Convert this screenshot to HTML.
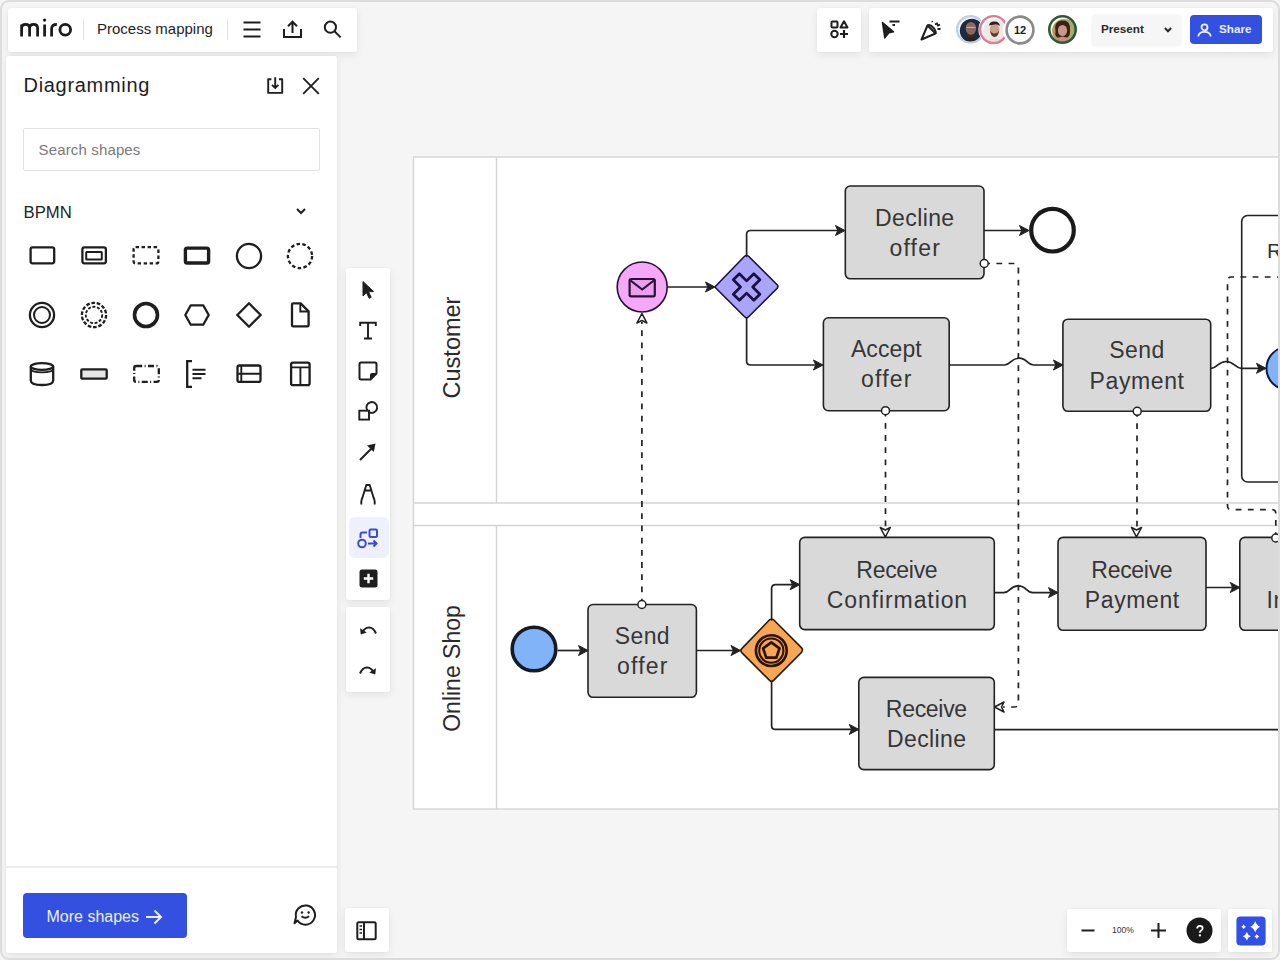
<!DOCTYPE html>
<html><head><meta charset="utf-8">
<style>
html,body{margin:0;padding:0;width:1280px;height:960px;overflow:hidden;background:#f5f5f5;font-family:"Liberation Sans",sans-serif;color:#1e1e1e;}
.frame{position:absolute;left:0;top:0;width:1280px;height:960px;box-sizing:border-box;border:2px solid #dcdcdc;border-radius:9px;pointer-events:none;z-index:50;}
.panel{position:absolute;background:#fff;border-radius:2px;box-shadow:0 3px 9px rgba(0,0,0,0.08),0 0 2px rgba(0,0,0,0.05);}
svg.full{position:absolute;left:0;top:0;}
.t{position:absolute;white-space:nowrap;line-height:1;}
.ic{position:absolute;overflow:visible;}
</style></head><body>
<svg class="full" width="1280" height="960" viewBox="0 0 1280 960" font-family="Liberation Sans, sans-serif">
<rect x="413.5" y="157" width="900" height="652" fill="#fff" stroke="#d4d4d4" stroke-width="1.4"/>
<line x1="413" y1="503" x2="1290" y2="503" stroke="#d4d4d4" stroke-width="1.4"/>
<line x1="413" y1="525.5" x2="1290" y2="525.5" stroke="#d4d4d4" stroke-width="1.4"/>
<line x1="496.5" y1="157" x2="496.5" y2="503" stroke="#d4d4d4" stroke-width="1.4"/>
<line x1="496.5" y1="525.5" x2="496.5" y2="809" stroke="#d4d4d4" stroke-width="1.4"/>
<text transform="translate(460,347.5) rotate(-90)" text-anchor="middle" font-size="23.5" fill="#2a2a2a">Customer</text>
<text transform="translate(460,668.5) rotate(-90)" text-anchor="middle" font-size="23" fill="#2a2a2a">Online Shop</text>
<rect x="1241.7" y="215.5" width="58.3" height="266.5" rx="6" fill="#fff" stroke="#222222" stroke-width="1.6"/>
<path d="M668,287 L714,287" fill="none" stroke="#222222" stroke-width="1.7" stroke-linejoin="round"/>
<polygon points="715.0,287.0 705.5,282.0 707.8,287.0 705.5,292.0" fill="#222222" stroke="#222222" stroke-width="1" stroke-linejoin="round"/>
<path d="M746.6,256 L746.6,234.5 Q746.6,230.5 750.6,230.5 L844,230.5" fill="none" stroke="#222222" stroke-width="1.7" stroke-linejoin="round"/>
<polygon points="845.0,230.5 835.5,225.5 837.8,230.5 835.5,235.5" fill="#222222" stroke="#222222" stroke-width="1" stroke-linejoin="round"/>
<path d="M746.6,318 L746.6,361 Q746.6,365 750.6,365 L822,365" fill="none" stroke="#222222" stroke-width="1.7" stroke-linejoin="round"/>
<polygon points="823.0,365.0 813.5,360.0 815.8,365.0 813.5,370.0" fill="#222222" stroke="#222222" stroke-width="1" stroke-linejoin="round"/>
<path d="M984,230.5 L1028,230.5" fill="none" stroke="#222222" stroke-width="1.7" stroke-linejoin="round"/>
<polygon points="1029.0,230.5 1019.5,225.5 1021.8,230.5 1019.5,235.5" fill="#222222" stroke="#222222" stroke-width="1" stroke-linejoin="round"/>
<path d="M949.2,365 L1004.5,365 C1011.0,365 1010.5,358.2 1019,358.2 C1027.5,358.2 1027.0,365 1033.5,365 L1062,365" fill="none" stroke="#222222" stroke-width="1.7" stroke-linejoin="round"/>
<polygon points="1063.0,365.0 1053.5,360.0 1055.8,365.0 1053.5,370.0" fill="#222222" stroke="#222222" stroke-width="1" stroke-linejoin="round"/>
<path d="M1210.7,368.3 L1211.2,368.3 C1217.7,368.3 1217.7,361.5 1226.2,361.5 C1234.7,361.5 1234.7,368.3 1241.2,368.3 L1265,368.3" fill="none" stroke="#222222" stroke-width="1.7" stroke-linejoin="round"/>
<polygon points="1266.0,368.3 1256.5,363.3 1258.8,368.3 1256.5,373.3" fill="#222222" stroke="#222222" stroke-width="1" stroke-linejoin="round"/>
<path d="M557.5,650.5 L587,650.5" fill="none" stroke="#222222" stroke-width="1.7" stroke-linejoin="round"/>
<polygon points="588.0,650.5 578.5,645.5 580.8,650.5 578.5,655.5" fill="#222222" stroke="#222222" stroke-width="1" stroke-linejoin="round"/>
<path d="M696.4,650.5 L739.5,650.5" fill="none" stroke="#222222" stroke-width="1.7" stroke-linejoin="round"/>
<polygon points="740.5,650.5 731.0,645.5 733.3,650.5 731.0,655.5" fill="#222222" stroke="#222222" stroke-width="1" stroke-linejoin="round"/>
<path d="M771.6,619.6 L771.6,588.7 Q771.6,584.7 775.6,584.7 L798.7,584.7" fill="none" stroke="#222222" stroke-width="1.7" stroke-linejoin="round"/>
<polygon points="799.7,584.7 790.2,579.7 792.5,584.7 790.2,589.7" fill="#222222" stroke="#222222" stroke-width="1" stroke-linejoin="round"/>
<path d="M771.6,681.6 L771.6,725.4 Q771.6,729.4 775.6,729.4 L857.8,729.4" fill="none" stroke="#222222" stroke-width="1.7" stroke-linejoin="round"/>
<polygon points="858.8,729.4 849.3,724.4 851.6,729.4 849.3,734.4" fill="#222222" stroke="#222222" stroke-width="1" stroke-linejoin="round"/>
<path d="M994.3,592.6 L1003.7,592.6 C1010.2,592.6 1009.7,585.8000000000001 1018.2,585.8000000000001 C1026.7,585.8000000000001 1026.2,592.6 1032.7,592.6 L1057,592.6" fill="none" stroke="#222222" stroke-width="1.7" stroke-linejoin="round"/>
<polygon points="1058.0,592.6 1048.5,587.6 1050.8,592.6 1048.5,597.6" fill="#222222" stroke="#222222" stroke-width="1" stroke-linejoin="round"/>
<path d="M1206,587.5 L1238.8,587.5" fill="none" stroke="#222222" stroke-width="1.7" stroke-linejoin="round"/>
<polygon points="1239.8,587.5 1230.3,582.5 1232.6,587.5 1230.3,592.5" fill="#222222" stroke="#222222" stroke-width="1" stroke-linejoin="round"/>
<path d="M994.3,729.6 L1290,729.6" fill="none" stroke="#222222" stroke-width="1.7" stroke-linejoin="round"/>
<path d="M641.9,604.5 L641.9,322" fill="none" stroke="#222222" stroke-width="1.7" stroke-dasharray="5.8 6.4" stroke-linejoin="round"/>
<polygon points="641.9,313.5 636.9,323.0 641.9,320.5 646.9,323.0" fill="#fff" stroke="#222222" stroke-width="1.6" stroke-linejoin="round"/>
<path d="M885.5,410.7 L885.5,528" fill="none" stroke="#222222" stroke-width="1.7" stroke-dasharray="5.8 6.4" stroke-linejoin="round"/>
<polygon points="885.3,537.0 880.3,527.5 885.3,530.0 890.3,527.5" fill="#fff" stroke="#222222" stroke-width="1.6" stroke-linejoin="round"/>
<path d="M1137,411 L1137,528" fill="none" stroke="#222222" stroke-width="1.7" stroke-dasharray="5.8 6.4" stroke-linejoin="round"/>
<polygon points="1136.5,537.0 1131.5,527.5 1136.5,530.0 1141.5,527.5" fill="#fff" stroke="#222222" stroke-width="1.6" stroke-linejoin="round"/>
<path d="M984.2,263.5 L1014.4,263.5 Q1018.4,263.5 1018.4,267.5 L1018.4,703 Q1018.4,707 1014.4,707 L1003,707" fill="none" stroke="#222222" stroke-width="1.7" stroke-dasharray="5.8 6.4" stroke-linejoin="round"/>
<polygon points="994.5,707.0 1004.0,702.0 1001.5,707.0 1004.0,712.0" fill="#fff" stroke="#222222" stroke-width="1.6" stroke-linejoin="round"/>
<path d="M1275.8,538 L1275.8,513.7 Q1275.8,509.7 1271.8,509.7 L1231.5,509.7 Q1227.5,509.7 1227.5,505.7 L1227.5,281 Q1227.5,277 1231.5,277 L1290,277" fill="none" stroke="#222222" stroke-width="1.7" stroke-dasharray="5.8 6.4" stroke-linejoin="round"/>
<rect x="845.3" y="186" width="138.7" height="92.8" rx="5" fill="#d9d9d9" stroke="#222222" stroke-width="1.6"/>
<rect x="823.4" y="317.8" width="125.8" height="92.9" rx="5" fill="#d9d9d9" stroke="#222222" stroke-width="1.6"/>
<rect x="1062.9" y="319.2" width="147.8" height="92.1" rx="5" fill="#d9d9d9" stroke="#222222" stroke-width="1.6"/>
<rect x="588" y="604.5" width="108.4" height="92.8" rx="5" fill="#d9d9d9" stroke="#222222" stroke-width="1.6"/>
<rect x="799.7" y="537.4" width="194.6" height="92.2" rx="5" fill="#d9d9d9" stroke="#222222" stroke-width="1.6"/>
<rect x="1058" y="537.4" width="148.0" height="92.9" rx="5" fill="#d9d9d9" stroke="#222222" stroke-width="1.6"/>
<rect x="858.8" y="677.4" width="135.5" height="92.2" rx="5" fill="#d9d9d9" stroke="#222222" stroke-width="1.6"/>
<rect x="1239.8" y="537.4" width="60.2" height="92.9" rx="5" fill="#d9d9d9" stroke="#222222" stroke-width="1.6"/>
<text x="914.80" y="226" text-anchor="middle" font-size="23" letter-spacing="0.4" fill="#363636">Decline</text>
<text x="915.20" y="256" text-anchor="middle" font-size="23" letter-spacing="1.2" fill="#363636">offer</text>
<text x="886.35" y="357.4" text-anchor="middle" font-size="23" letter-spacing="0.1" fill="#363636">Accept</text>
<text x="886.90" y="387.4" text-anchor="middle" font-size="23" letter-spacing="1.2" fill="#363636">offer</text>
<text x="1137.00" y="358.2" text-anchor="middle" font-size="23" letter-spacing="0.4" fill="#363636">Send</text>
<text x="1137.10" y="388.7" text-anchor="middle" font-size="23" letter-spacing="0.6" fill="#363636">Payment</text>
<text x="642.40" y="644.4" text-anchor="middle" font-size="23" letter-spacing="0.4" fill="#363636">Send</text>
<text x="642.80" y="673.9" text-anchor="middle" font-size="23" letter-spacing="1.2" fill="#363636">offer</text>
<text x="896.85" y="577.6" text-anchor="middle" font-size="23" letter-spacing="-0.3" fill="#363636">Receive</text>
<text x="897.45" y="607.6" text-anchor="middle" font-size="23" letter-spacing="0.9" fill="#363636">Confirmation</text>
<text x="1131.85" y="577.5" text-anchor="middle" font-size="23" letter-spacing="-0.3" fill="#363636">Receive</text>
<text x="1132.30" y="607.8" text-anchor="middle" font-size="23" letter-spacing="0.6" fill="#363636">Payment</text>
<text x="926.35" y="716.8" text-anchor="middle" font-size="23" letter-spacing="-0.3" fill="#363636">Receive</text>
<text x="926.70" y="747.1999999999999" text-anchor="middle" font-size="23" letter-spacing="0.4" fill="#363636">Decline</text>
<text x="1266.6" y="607.8" font-size="23" letter-spacing="0.4" fill="#363636">In</text>
<text x="1267" y="257.5" font-size="21" fill="#333">R</text>
<circle cx="642.2" cy="287" r="25" fill="#f4a8f8" stroke="#2a0f3a" stroke-width="1.6"/>
<rect x="629.6" y="279" width="25.2" height="17.3" rx="1.5" fill="#e9a0ec" stroke="#2a0f3a" stroke-width="2.2"/>
<path d="M630.5,280.5 L642.2,289.5 L653.9,280.5" fill="none" stroke="#2a0f3a" stroke-width="2.2" stroke-linejoin="round"/>
<path d="M746.6,256.2 Q747.6,255.2 748.6,256.2 L777.4,285 Q778.4,286 777.4,288 L748.6,316.8 Q746.6,318.8 744.6,316.8 L715.8,288 Q714.8,287 715.8,286 L744.6,256.2 Q745.6,255.2 746.6,256.2 Z" fill="#aaa4fa" stroke="#1a1040" stroke-width="1.6"/>
<path transform="translate(746.6,287) rotate(45)" d="M-4.3,-14.5 L4.3,-14.5 L4.3,-4.3 L14.5,-4.3 L14.5,4.3 L4.3,4.3 L4.3,14.5 L-4.3,14.5 L-4.3,4.3 L-14.5,4.3 L-14.5,-4.3 L-4.3,-4.3 Z" fill="#aaa4fa" stroke="#1a1040" stroke-width="2.7" stroke-linejoin="round"/>
<circle cx="1052.5" cy="230.2" r="21.3" fill="#fff" stroke="#1a1a1a" stroke-width="4.2"/>
<circle cx="534" cy="649" r="21.8" fill="#80b3f7" stroke="#161a24" stroke-width="3.6"/>
<circle cx="1288" cy="368.3" r="21.5" fill="#80b3f7" stroke="#101a40" stroke-width="2"/>
<path d="M771.6,619.8 Q772.6,618.8 773.6,619.8 L801.4,647.6 Q803.4,649.6 801.4,652.6 L773.6,680.4 Q771.6,682.4 769.6,680.4 L741.8,652.6 Q739.8,650.6 741.8,648.6 L769.6,619.8 Q770.6,618.8 771.6,619.8 Z" fill="#f7a655" stroke="#2a1a08" stroke-width="1.6"/>
<circle cx="771.3" cy="650.6" r="15.4" fill="none" stroke="#2a1205" stroke-width="2.6"/>
<circle cx="771.3" cy="650.6" r="12.1" fill="none" stroke="#2a1205" stroke-width="2.1"/>
<polygon points="771.3,642.3 779.5,648.3 776.4,657.6 766.2,657.6 763.1,648.3" fill="none" stroke="#2a1205" stroke-width="2.7" stroke-linejoin="round"/>
<circle cx="641.9" cy="604.5" r="4" fill="#fff" stroke="#222222" stroke-width="1.5"/>
<circle cx="885.5" cy="410.7" r="4" fill="#fff" stroke="#222222" stroke-width="1.5"/>
<circle cx="1137.2" cy="411.3" r="4" fill="#fff" stroke="#222222" stroke-width="1.5"/>
<circle cx="984.2" cy="263.5" r="4" fill="#fff" stroke="#222222" stroke-width="1.5"/>
<circle cx="1275.8" cy="538" r="4" fill="#fff" stroke="#222222" stroke-width="1.5"/>
</svg>
<div class="panel" style="left:8px;top:8px;width:349px;height:44px;border-radius:2px;"></div>
<svg class="ic" style="left:0px;top:0px" width="80" height="50" viewBox="0 0 80 50"><path d="M21.6,36.6V24.4M21.6,28.3Q21.6,24.3 25.6,24.3Q29.6,24.3 29.6,28.3V36.6M29.6,28.3Q29.6,24.3 33.6,24.3Q37.6,24.3 37.6,28.3V36.6M44.6,24.4V36.6M51.6,36.6V29Q51.6,24.4 56.9,24.4" fill="none" stroke="#1a1a1a" stroke-width="2.75"/><circle cx="44.6" cy="20.1" r="1.65" fill="#1a1a1a"/><circle cx="65.25" cy="29.8" r="5.35" fill="none" stroke="#1a1a1a" stroke-width="2.8"/></svg>
<div class="abs" style="position:absolute;left:83px;top:19px;width:1px;height:21px;background:#e3e3e3"></div>
<div class="t" style="left:97px;top:21.2px;font-size:15px;color:#1e1e1e;">Process mapping</div>
<div class="abs" style="position:absolute;left:227px;top:19px;width:1px;height:21px;background:#e3e3e3"></div>
<svg class="ic" style="left:243px;top:21px" width="18" height="17" viewBox="0 0 18 17"><path d="M0.5,1.5H17.5M0.5,8.5H17.5M0.5,15.5H17.5" stroke="#1e1e1e" stroke-width="2" fill="none"/></svg>
<svg class="ic" style="left:283px;top:20px" width="19" height="18" viewBox="0 0 19 18"><path d="M1,9V17H18V9" stroke="#1e1e1e" stroke-width="2" fill="none"/><path d="M9.5,13V2M5,6.2L9.5,1.7L14,6.2" stroke="#1e1e1e" stroke-width="2" fill="none"/></svg>
<svg class="ic" style="left:323px;top:20px" width="19" height="19" viewBox="0 0 19 19"><circle cx="7.4" cy="7.2" r="5.6" stroke="#1e1e1e" stroke-width="2" fill="none"/><path d="M11.5,11.3L17.6,17.4" stroke="#1e1e1e" stroke-width="2" fill="none"/></svg>
<div class="panel" style="left:6px;top:56px;width:331px;height:897px;border-radius:2px;"></div>
<div class="abs" style="position:absolute;left:6px;top:866px;width:331px;height:1.5px;background:#ececec"></div>
<div class="t" style="left:23.5px;top:74.5px;font-size:20px;letter-spacing:0.7px;color:#1e1e1e;">Diagramming</div>
<svg class="ic" style="left:266px;top:76px" width="19" height="19" viewBox="0 0 19 19"><path d="M5.4,3.3H2.2V16.9H16.2V3.3H13" stroke="#1e1e1e" stroke-width="1.9" fill="none" stroke-linejoin="round"/><path d="M9.2,1.2V12M6,8.8L9.2,12L12.4,8.8" stroke="#1e1e1e" stroke-width="1.9" fill="none"/></svg>
<svg class="ic" style="left:302px;top:77px" width="18" height="18" viewBox="0 0 18 18"><path d="M1.2,1.2L16.8,16.8M16.8,1.2L1.2,16.8" stroke="#1e1e1e" stroke-width="1.85" fill="none"/></svg>
<div class="abs" style="position:absolute;left:23px;top:127.5px;width:295px;height:41px;border:1px solid #e2e2e2;border-radius:2px;"></div>
<div class="t" style="left:38.5px;top:141.6px;font-size:15px;letter-spacing:0.15px;color:#7a7a7a;">Search shapes</div>
<div class="t" style="left:23.5px;top:204.7px;font-size:16.7px;color:#1e1e1e;">BPMN</div>
<svg class="ic" style="left:296px;top:208px" width="10" height="7" viewBox="0 0 10 7"><path d="M1,1L5,5L9,1" stroke="#1e1e1e" stroke-width="2" fill="none"/></svg>
<svg class="ic" style="left:27.4px;top:240.5px" width="30" height="30" viewBox="0 0 30 30"><rect x="3.6" y="6.3" width="23.6" height="16" rx="2" fill="none" stroke="#1e1e1e" stroke-width="2.3"/></svg>
<svg class="ic" style="left:79.0px;top:240.5px" width="30" height="30" viewBox="0 0 30 30"><rect x="3.4" y="6.3" width="23.5" height="16" rx="2" fill="none" stroke="#1e1e1e" stroke-width="2.3"/><rect x="7.2" y="11" width="15.6" height="7.4" rx="0.5" fill="none" stroke="#1e1e1e" stroke-width="2"/></svg>
<svg class="ic" style="left:130.5px;top:240.5px" width="30" height="30" viewBox="0 0 30 30"><rect x="2.6" y="6.2" width="24.8" height="16.2" rx="2" fill="none" stroke="#1e1e1e" stroke-width="2.3" stroke-dasharray="3.4 2.6"/></svg>
<svg class="ic" style="left:182.0px;top:240.5px" width="30" height="30" viewBox="0 0 30 30"><rect x="3.4" y="7.1" width="23.2" height="14.9" rx="1.8" fill="none" stroke="#1e1e1e" stroke-width="3.4"/></svg>
<svg class="ic" style="left:233.8px;top:240.5px" width="30" height="30" viewBox="0 0 30 30"><circle cx="15" cy="15" r="12.1" fill="none" stroke="#1e1e1e" stroke-width="2.3"/></svg>
<svg class="ic" style="left:285.0px;top:240.5px" width="30" height="30" viewBox="0 0 30 30"><circle cx="15" cy="15" r="12.1" fill="none" stroke="#1e1e1e" stroke-width="2.3" stroke-dasharray="3.6 2.3"/></svg>
<svg class="ic" style="left:27.4px;top:299.8px" width="30" height="30" viewBox="0 0 30 30"><circle cx="15" cy="15" r="12.1" fill="none" stroke="#1e1e1e" stroke-width="2.3"/><circle cx="15" cy="15" r="8" fill="none" stroke="#1e1e1e" stroke-width="2"/></svg>
<svg class="ic" style="left:79.0px;top:299.8px" width="30" height="30" viewBox="0 0 30 30"><circle cx="15" cy="15" r="12.1" fill="none" stroke="#1e1e1e" stroke-width="2.3" stroke-dasharray="3.7 1.7"/><circle cx="15" cy="15" r="8.2" fill="none" stroke="#1e1e1e" stroke-width="1.9" stroke-dasharray="3 1.6"/></svg>
<svg class="ic" style="left:130.5px;top:299.8px" width="30" height="30" viewBox="0 0 30 30"><circle cx="15" cy="15" r="11.5" fill="none" stroke="#1e1e1e" stroke-width="3.6"/></svg>
<svg class="ic" style="left:182.0px;top:299.8px" width="30" height="30" viewBox="0 0 30 30"><path d="M8.8,5.3H21.2L26.7,15L21.2,24.7H8.8L3.3,15Z" fill="none" stroke="#1e1e1e" stroke-width="2.3" stroke-linejoin="round"/></svg>
<svg class="ic" style="left:233.8px;top:299.8px" width="30" height="30" viewBox="0 0 30 30"><path d="M15,3.3L26.7,15L15,26.7L3.3,15Z" fill="none" stroke="#1e1e1e" stroke-width="2.3" stroke-linejoin="round"/></svg>
<svg class="ic" style="left:285.0px;top:299.8px" width="30" height="30" viewBox="0 0 30 30"><path d="M7,4.6Q7,3.4 8.2,3.4H15.6L23.6,11.4V25.2Q23.6,26.4 22.4,26.4H8.2Q7,26.4 7,25.2Z" fill="none" stroke="#1e1e1e" stroke-width="2.3" stroke-linejoin="round"/><path d="M15.3,3.6V11.5H23.4" fill="none" stroke="#1e1e1e" stroke-width="1.9"/></svg>
<svg class="ic" style="left:27.4px;top:359.0px" width="30" height="30" viewBox="0 0 30 30"><path d="M3.8,7.5V21.5Q3.8,26 15,26Q26.2,26 26.2,21.5V7.5" fill="none" stroke="#1e1e1e" stroke-width="2.3"/><ellipse cx="15" cy="7.5" rx="11.2" ry="3.4" fill="none" stroke="#1e1e1e" stroke-width="2.3"/><path d="M3.8,10.3Q4.5,13.4 15,13.4Q25.5,13.4 26.2,10.3" fill="none" stroke="#1e1e1e" stroke-width="1.8"/></svg>
<svg class="ic" style="left:79.0px;top:359.0px" width="30" height="30" viewBox="0 0 30 30"><rect x="2.3" y="10.3" width="25.4" height="9.4" rx="1" fill="#e6e6e6" stroke="#1e1e1e" stroke-width="2.3"/></svg>
<svg class="ic" style="left:130.5px;top:359.0px" width="30" height="30" viewBox="0 0 30 30"><rect x="3.2" y="7" width="24.6" height="15.9" rx="2" fill="none" stroke="#1e1e1e" stroke-width="2.3" stroke-dasharray="6 2.4 1 2.4"/></svg>
<svg class="ic" style="left:182.0px;top:359.0px" width="30" height="30" viewBox="0 0 30 30"><path d="M10,2.2H5.2V27.8H10" fill="none" stroke="#1e1e1e" stroke-width="2.3"/><path d="M10.5,10.7H23.5M10.5,15H23.5M10.5,19.3H19.5" fill="none" stroke="#1e1e1e" stroke-width="2"/></svg>
<svg class="ic" style="left:233.8px;top:359.0px" width="30" height="30" viewBox="0 0 30 30"><rect x="3.5" y="6.5" width="23" height="16.4" rx="2" fill="none" stroke="#1e1e1e" stroke-width="2.3"/><path d="M3.5,14.8H26.5M7.3,6.8V22.8" fill="none" stroke="#1e1e1e" stroke-width="1.9"/></svg>
<svg class="ic" style="left:285.0px;top:359.0px" width="30" height="30" viewBox="0 0 30 30"><rect x="6.1" y="3.6" width="18.5" height="22.6" rx="2" fill="none" stroke="#1e1e1e" stroke-width="2.3"/><path d="M6.2,8.4H24.5M15.4,8.4V26" fill="none" stroke="#1e1e1e" stroke-width="1.9"/></svg>
<div class="panel" style="left:346px;top:268px;width:44px;height:332px;border-radius:2px;"></div>
<div class="panel" style="left:346px;top:607px;width:44px;height:85px;border-radius:2px;"></div>
<div class="abs" style="position:absolute;left:348.5px;top:517px;width:40px;height:40.5px;border-radius:6px;background:#eef0fc"></div>
<svg class="ic" style="left:358px;top:280px" width="20" height="20" viewBox="0 0 20 20"><path d="M5,1.5L15.5,11.5L10.5,11.8L13.2,17.3L11.2,18.3L8.5,12.7L5,16Z" fill="#1e1e1e" stroke="#1e1e1e" stroke-width="1" stroke-linejoin="round"/></svg>
<svg class="ic" style="left:358px;top:321px" width="20" height="20" viewBox="0 0 20 20"><path d="M2.2,5V1.8H17.8V5M10,1.8V17.5M6,17.5H14" fill="none" stroke="#1e1e1e" stroke-width="1.9"/></svg>
<svg class="ic" style="left:358px;top:361px" width="20" height="20" viewBox="0 0 20 20"><path d="M1.5,3Q1.5,1.5 3,1.5H17Q18.5,1.5 18.5,3V12.5L12.5,18.5H3Q1.5,18.5 1.5,17Z" fill="none" stroke="#1e1e1e" stroke-width="2" stroke-linejoin="round"/><path d="M18.5,12L12,18.5V14Q12,12 14,12Z" fill="#1e1e1e"/></svg>
<svg class="ic" style="left:358px;top:401px" width="21" height="21" viewBox="0 0 21 21"><rect x="1.3" y="9.7" width="9.7" height="8.9" fill="none" stroke="#1e1e1e" stroke-width="1.9"/><path d="M9.45,9.7A5.4,5.4 0 1 1 11,11.1" fill="none" stroke="#1e1e1e" stroke-width="1.9"/></svg>
<svg class="ic" style="left:358px;top:442px" width="20" height="20" viewBox="0 0 20 20"><path d="M2,18L15,5" stroke="#1e1e1e" stroke-width="2" fill="none"/><path d="M9,3.5L17.5,1.5L15.8,10Z" fill="#1e1e1e"/></svg>
<svg class="ic" style="left:358px;top:482.5px" width="20" height="22" viewBox="0 0 20 22"><path d="M3.3,21.5V18.5Q3.3,17 4.5,14.5L8.3,2H11.7L15.5,14.5Q16.7,17 16.7,18.5V21.5M6.5,7.5H13.5" fill="none" stroke="#1e1e1e" stroke-width="1.9" stroke-linejoin="round"/></svg>
<svg class="ic" style="left:357px;top:527.5px" width="22" height="21" viewBox="0 0 22 21"><circle cx="5" cy="15.5" r="3.8" fill="none" stroke="#3d4bd1" stroke-width="2"/><rect x="12.5" y="1.5" width="7.5" height="7.5" rx="1.2" fill="none" stroke="#3d4bd1" stroke-width="2"/><path d="M3.5,10V6.5Q3.5,4.5 5.5,4.5H10" fill="none" stroke="#3d4bd1" stroke-width="2"/><path d="M11,15.5H19.5M16.5,12.5L19.5,15.5L16.5,18.5" fill="none" stroke="#3d4bd1" stroke-width="2"/></svg>
<svg class="ic" style="left:358.5px;top:568.5px" width="19" height="19" viewBox="0 0 19 19"><rect x="0.5" y="0.5" width="18" height="18" rx="2.5" fill="#1e1e1e"/><path d="M9.5,4.8V14.2M4.8,9.5H14.2" stroke="#fff" stroke-width="2.4"/></svg>
<svg class="ic" style="left:359px;top:624px" width="18" height="12" viewBox="0 0 18 12"><path d="M2.5,9.5Q5.5,3.5 10,3.5Q14.5,3.5 17,9.5" fill="none" stroke="#1e1e1e" stroke-width="2"/><path d="M1,4.2L1.8,10.6L7.8,8.6Z" fill="#1e1e1e"/></svg>
<svg class="ic" style="left:359px;top:664px" width="18" height="12" viewBox="0 0 18 12"><path d="M15.5,9.5Q12.5,3.5 8,3.5Q3.5,3.5 1,9.5" fill="none" stroke="#1e1e1e" stroke-width="2"/><path d="M17,4.2L16.2,10.6L10.2,8.6Z" fill="#1e1e1e"/></svg>
<div class="abs" style="position:absolute;left:23px;top:893px;width:164px;height:44.5px;border-radius:4px;background:#3450e0"></div>
<div class="t" style="left:46.5px;top:908.5px;font-size:16px;color:#eaf0ff;">More shapes</div>
<svg class="ic" style="left:145px;top:908.5px" width="18" height="16" viewBox="0 0 18 16"><path d="M1,8H16M9.5,1.5L16,8L9.5,14.5" stroke="#eaf0ff" stroke-width="2" fill="none"/></svg>
<svg class="ic" style="left:292px;top:901px" width="24" height="24" viewBox="0 0 24 24"><path d="M5.5,19.5A9.6,9.6 0 1 0 4,16L2.5,22.2Z" fill="none" stroke="#1e1e1e" stroke-width="2" stroke-linejoin="round"/><circle cx="10" cy="11.5" r="1.2" fill="#1e1e1e"/><circle cx="16.6" cy="11.5" r="1.2" fill="#1e1e1e"/><path d="M9.5,15.3Q13.3,18.3 17.1,15.3" fill="none" stroke="#1e1e1e" stroke-width="2"/></svg>
<div class="panel" style="left:345px;top:908px;width:44px;height:44px;border-radius:2px;"></div>
<svg class="ic" style="left:356px;top:920.5px" width="21" height="20" viewBox="0 0 21 20"><rect x="1.3" y="1.3" width="18.4" height="17" rx="1.5" fill="none" stroke="#1e1e1e" stroke-width="2"/><path d="M8,1.5V18.5" stroke="#1e1e1e" stroke-width="2"/><path d="M3.5,5H6M3.5,8.5H6M3.5,12H6" stroke="#1e1e1e" stroke-width="1.6"/></svg>
<div class="panel" style="left:817px;top:8px;width:44px;height:44px;border-radius:2px;"></div>
<svg class="ic" style="left:830px;top:20px" width="19" height="19" viewBox="0 0 19 19"><rect x="1.5" y="1.5" width="6" height="6" rx="1" fill="none" stroke="#1e1e1e" stroke-width="2"/><path d="M14,1.3L17.5,7.5H10.5Z" fill="none" stroke="#1e1e1e" stroke-width="2" stroke-linejoin="round"/><circle cx="4.5" cy="14" r="3.2" fill="none" stroke="#1e1e1e" stroke-width="2"/><path d="M14,10V18M10,14H18" stroke="#1e1e1e" stroke-width="2.2"/></svg>
<div class="panel" style="left:869px;top:8px;width:404px;height:44px;border-radius:2px;"></div>
<svg class="ic" style="left:881px;top:20px" width="21" height="20" viewBox="0 0 21 20"><path d="M1.5,2.5L12.5,11.8L7.8,12.8L3.8,17.8Z" fill="#1e1e1e" stroke="#1e1e1e" stroke-width="1.6" stroke-linejoin="round"/><path d="M8.5,1.5H18.5M11.5,5H14" stroke="#1e1e1e" stroke-width="1.8"/></svg>
<svg class="ic" style="left:920px;top:20px" width="23" height="21" viewBox="0 0 23 21"><path d="M1.5,19.5L7.5,5.5L15.5,13.5Z" fill="none" stroke="#1e1e1e" stroke-width="2" stroke-linejoin="round"/><path d="M7.5,5.5Q10,4 13.5,8Q16.5,11.5 15.5,13.5" fill="none" stroke="#1e1e1e" stroke-width="2"/><path d="M15,4.5L17,3.5L18,5.5L20,4.5M17.5,9H20.5M12,1.2L12.5,2.2" fill="none" stroke="#1e1e1e" stroke-width="1.8"/></svg>
<svg class="ic" style="left:955.4px;top:13.999999999999998px" width="30.8" height="30.8" viewBox="0 0 30.8 30.8"><defs><clipPath id="c1"><circle cx="15.4" cy="15.4" r="12.0"/></clipPath></defs><circle cx="15.4" cy="15.4" r="15.0" fill="#fff"/><g clip-path="url(#c1)" transform="translate(1.4000000000000004,1.4000000000000004)"><rect x="0" y="0" width="28" height="28" fill="#1d2a42"/><ellipse cx="14.5" cy="13" rx="5.2" ry="6.5" fill="#8a6a5e"/><path d="M9.5,15Q10,22 14.5,23Q19,22 19.5,15Q19,19 14.5,19.5Q10,19 9.5,15Z" fill="#3a2a26"/><path d="M10,12H19" stroke="#c8b8b0" stroke-width="1"/><path d="M6,28Q7,22 14.5,22Q22,22 23,28Z" fill="#2c2220"/></g><circle cx="15.4" cy="15.4" r="13.200000000000001" fill="none" stroke="#bfd0ee" stroke-width="2.4"/></svg>
<svg class="ic" style="left:978.1999999999999px;top:13.799999999999999px" width="31.2" height="31.2" viewBox="0 0 31.2 31.2"><defs><clipPath id="c2"><circle cx="15.6" cy="15.6" r="12.3"/></clipPath></defs><circle cx="15.6" cy="15.6" r="15.2" fill="#fff"/><g clip-path="url(#c2)" transform="translate(1.5999999999999996,1.5999999999999996)"><rect x="0" y="0" width="28" height="28" fill="#efe9e6"/><ellipse cx="15" cy="14" rx="4.8" ry="6" fill="#c9a08c"/><path d="M9.5,10Q10,5.5 15,5.8Q20,6 20.3,10.5Q18,8.5 15,8.8Q12,9 9.5,10Z" fill="#2e211c"/><path d="M10.5,15Q11,21 15,21.5Q19,21 19.5,15Q18,18 15,18Q12,18 10.5,15Z" fill="#5a3c30"/><path d="M7,28Q8,22.5 15,22.5Q22,22.5 23,28Z" fill="#e8ddd6"/></g><circle cx="15.6" cy="15.6" r="13.45" fill="none" stroke="#e07a92" stroke-width="2.3"/></svg>
<div class="abs" style="position:absolute;left:1003px;top:13.5px;width:33px;height:33px;border-radius:50%;background:#fff"></div>
<svg class="ic" style="left:1005px;top:14.5px" width="30" height="30" viewBox="0 0 30 30"><circle cx="15" cy="15" r="13.4" fill="#fff" stroke="#8a8a8a" stroke-width="2.6"/><text x="15" y="19" text-anchor="middle" font-size="11" font-weight="bold" fill="#222" font-family="Liberation Sans">12</text></svg>
<svg class="ic" style="left:1046.9px;top:13.8px" width="31.0" height="31.0" viewBox="0 0 31.0 31.0"><defs><clipPath id="c4"><circle cx="15.5" cy="15.5" r="11.9"/></clipPath></defs><circle cx="15.5" cy="15.5" r="15.1" fill="#fff"/><g clip-path="url(#c4)" transform="translate(1.5,1.5)"><rect x="0" y="0" width="28" height="28" fill="#b39a5c"/><rect x="18" y="0" width="10" height="28" fill="#a8a878"/><path d="M7,16Q5,6 13,5Q22,4 21.5,14Q22,20 19,22L9,22Q6,20 7,16Z" fill="#3a2214"/><ellipse cx="14" cy="15" rx="4.6" ry="5.6" fill="#c9968a"/><path d="M8,28Q9,21 14,21Q19,21 20,28Z" fill="#c48e82"/></g><circle cx="15.5" cy="15.5" r="13.2" fill="none" stroke="#2f5a30" stroke-width="2.6"/></svg>
<div class="abs" style="position:absolute;left:1092px;top:14.5px;width:89px;height:31.5px;border-radius:4px;background:#f6f6f6;box-shadow:0 0 2px 1px #f7f7f7"></div>
<div class="t" style="left:1101px;top:23px;font-size:11.7px;font-weight:bold;color:#2a2a2a;">Present</div>
<svg class="ic" style="left:1163.5px;top:27px" width="8" height="6" viewBox="0 0 8 6"><path d="M0.9,1L4,4.3L7.1,1" stroke="#2a2a2a" stroke-width="2" fill="none"/></svg>
<div class="abs" style="position:absolute;left:1189.5px;top:14.8px;width:72px;height:29.4px;border-radius:4px;background:#3450e0"></div>
<svg class="ic" style="left:1197px;top:22.5px" width="15" height="14" viewBox="0 0 15 14"><circle cx="7.5" cy="4.3" r="3" fill="none" stroke="#eaf0ff" stroke-width="1.8"/><path d="M1.3,13.5Q1.5,8.8 7.5,8.8Q13.5,8.8 13.7,13.5" fill="none" stroke="#eaf0ff" stroke-width="1.8"/></svg>
<div class="t" style="left:1219px;top:22.5px;font-size:11.7px;font-weight:bold;color:#eaf0ff;">Share</div>
<div class="panel" style="left:1067px;top:908.5px;width:154px;height:43px;border-radius:2px;"></div>
<svg class="ic" style="left:1080px;top:929px" width="16" height="3" viewBox="0 0 16 3"><path d="M1.5,1.5H14.5" stroke="#1e1e1e" stroke-width="2"/></svg>
<div class="t" style="left:1112px;top:926px;font-size:8.6px;color:#333;">100%</div>
<svg class="ic" style="left:1150px;top:922px" width="17" height="17" viewBox="0 0 17 17"><path d="M8.5,1V16M1,8.5H16" stroke="#1e1e1e" stroke-width="2"/></svg>
<svg class="ic" style="left:1185.5px;top:917px" width="27" height="27" viewBox="0 0 27 27"><circle cx="13.5" cy="13.5" r="13" fill="#1a1a1a"/><path d="M11.2,11.6Q11.2,8.9 13.9,8.9Q16.6,8.9 16.6,11.3Q16.6,12.8 14.9,13.7Q13.9,14.2 13.9,15.7" fill="none" stroke="#fff" stroke-width="1.8"/><circle cx="13.9" cy="18.4" r="1.15" fill="#fff"/></svg>
<div class="panel" style="left:1227.5px;top:908.5px;width:44px;height:43px;border-radius:2px;"></div>
<svg class="ic" style="left:1235.5px;top:915.5px" width="30" height="30" viewBox="0 0 30 30"><rect x="0.4" y="0.5" width="29.2" height="29" rx="4" fill="#3150e8"/><path d="M19.2,5.000000000000001Q20.45,9.350000000000001 24.2,10.8Q20.45,12.25 19.2,16.6Q17.95,12.25 14.2,10.8Q17.95,9.350000000000001 19.2,5.000000000000001ZM10.8,16.0Q11.8,19.15 14.8,20.2Q11.8,21.25 10.8,24.4Q9.8,21.25 6.800000000000001,20.2Q9.8,19.15 10.8,16.0ZM7.6,8.3Q8.29,10.05 9.899999999999999,10.8Q8.29,11.55 7.6,13.3Q6.91,11.55 5.3,10.8Q6.91,10.05 7.6,8.3ZM20.8,18.1Q21.55,19.85 23.3,20.6Q21.55,21.35 20.8,23.1Q20.05,21.35 18.3,20.6Q20.05,19.85 20.8,18.1Z" fill="#fff"/></svg>
<div class="frame"></div>
</body></html>
